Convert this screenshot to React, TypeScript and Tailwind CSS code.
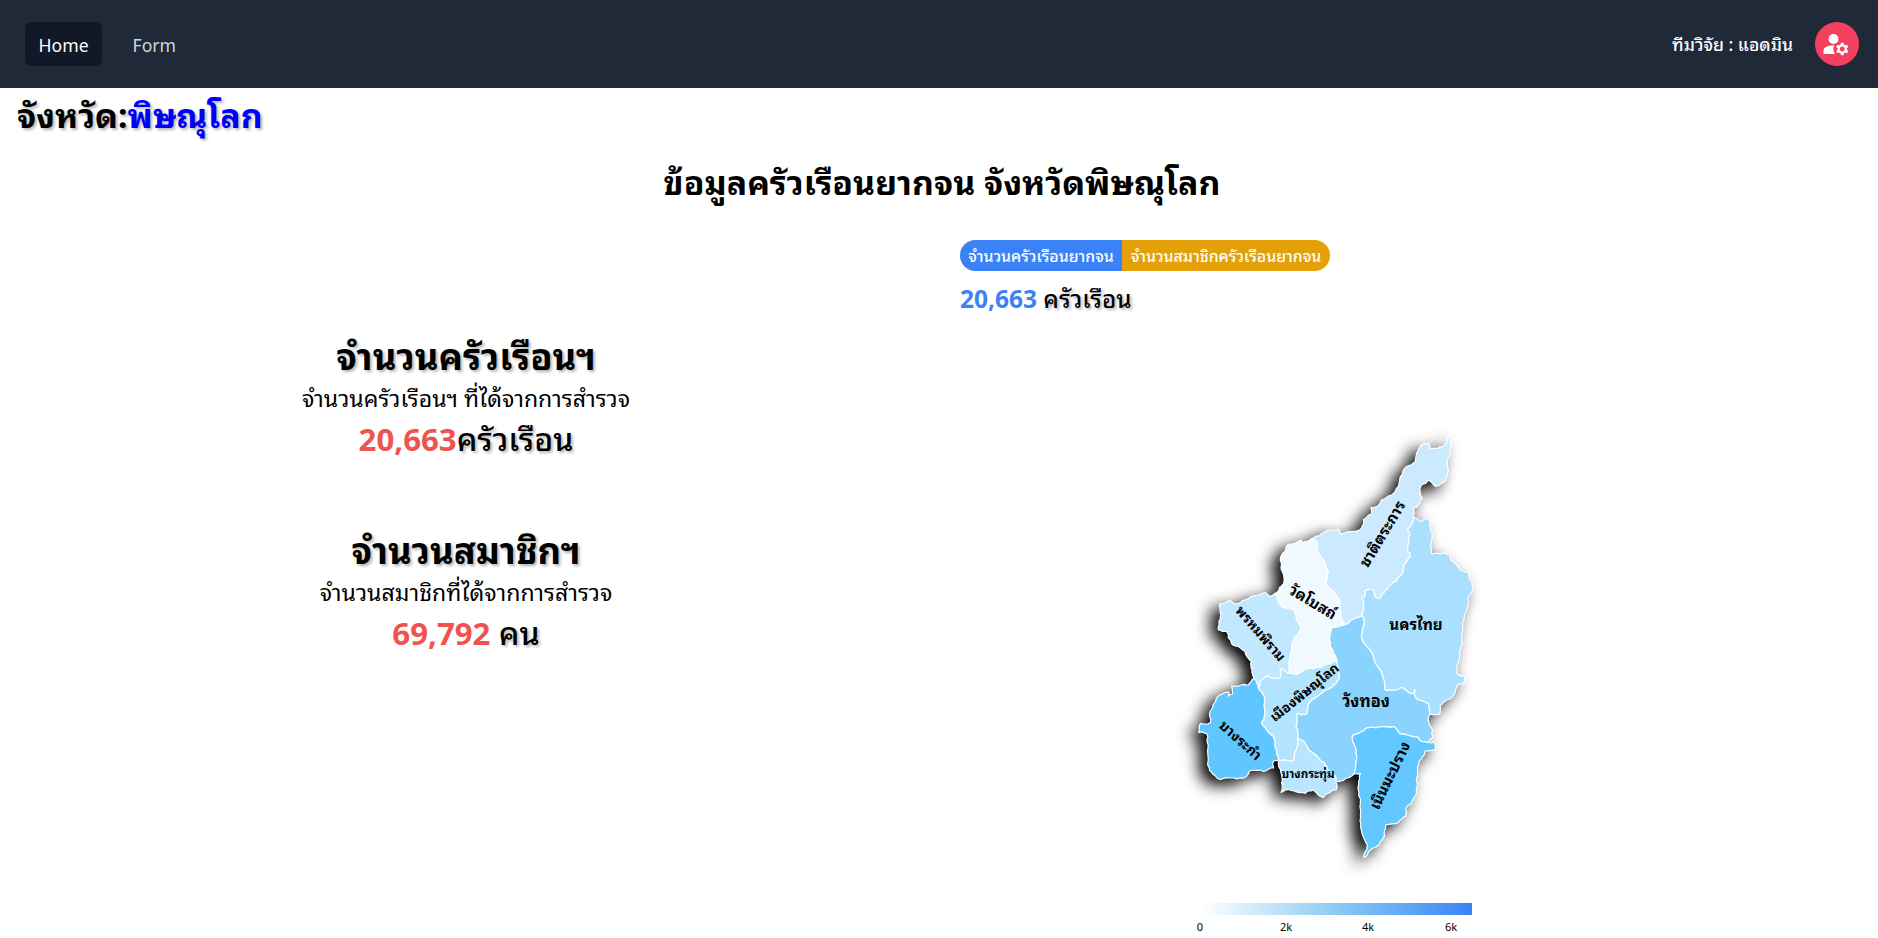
import React from "react";
import { MdManageAccounts } from "react-icons/md";

type Pt = [number, number];

const rev = (a: Pt[]): Pt[] => [...a].reverse();

// Borders shared by neighbouring districts
const chatOuter: Pt[] = [[1311.5,538.5],[1320,535],[1328,530],[1338.5,529],[1340.5,534],[1350,531.5],[1361.5,528.5],[1363.5,519.5],[1371.5,514],[1371,507.5],[1378,506],[1381.5,500],[1391.5,495],[1398.5,486.5],[1400.5,476.5],[1406.5,466.5],[1415.5,461.5],[1416.5,453.5],[1422.5,444],[1428.5,443.5],[1430.5,448.5],[1440,447],[1445,445],[1448.5,436],[1450.5,440.5],[1450,450],[1447.5,461.5],[1448.5,470],[1442.5,483],[1436,486.5],[1428.5,480],[1421.5,485],[1420,491.5],[1422.5,498],[1414,508],[1413.5,517.5]];
const chatNakhon: Pt[] = [[1413.5,517.5],[1410.5,526],[1406.5,530],[1410,533],[1407.5,550],[1410,557],[1403.5,568],[1396,581.5],[1385,590.5],[1380,598.5],[1375,597],[1373.5,590],[1369,589],[1365,591],[1364.5,597],[1361.5,598],[1364,607],[1362.5,616]];
const chatWang: Pt[] = [[1362.5,616],[1353.5,619],[1345,624.5]];
const chatWat: Pt[] = [[1345,624.5],[1341,618],[1340,600],[1335,593],[1326.5,585],[1328.5,571.5],[1323.5,560],[1317.5,550],[1316.5,541.5],[1311.5,538.5]];
const watOuter: Pt[] = [[1275,593.5],[1284,581.5],[1281.5,563],[1281.5,555],[1286.5,546.5],[1300.5,540],[1302.5,543],[1311.5,538.5]];
const watPhrom: Pt[] = [[1275,593.5],[1282.5,607.5],[1294,608.5],[1300.5,630.5],[1293,641.5],[1290,656.5],[1290,673.5]];
const watMueang: Pt[] = [[1290,673.5],[1296,674.5],[1310,668],[1326.5,664],[1337,661]];
const watWang: Pt[] = [[1337,661],[1335,655],[1330,646.5],[1330.5,633],[1332,627],[1337,627],[1345,624.5]];
const nakhonOuter: Pt[] = [[1413.5,517.5],[1420,521.5],[1426,518.5],[1430.5,521.5],[1432,533],[1431.5,553.5],[1450,555],[1451.5,560.5],[1460,570],[1467.5,572.5],[1473.5,586.5],[1468,598],[1466.5,610],[1462.5,623.5],[1462,640],[1459.5,656.5],[1456.5,673.5],[1465,676.5],[1463.5,683.5],[1457.5,685],[1453.5,695],[1440.5,705],[1439.5,714.5],[1429.5,714.5]];
const nakhonWang: Pt[] = [[1429.5,714.5],[1428.5,704],[1418,700],[1415,696],[1415,690],[1412,694],[1402.5,687.5],[1391.5,690.5],[1384.5,689.5],[1382.5,676.5],[1373.5,656.5],[1361.5,638.5],[1364,623.5],[1362.5,616]];
const wangOuterE: Pt[] = [[1429.5,714.5],[1428.5,721.5],[1432,728.5],[1433.5,736.5],[1428.5,742.5]];
const wangNoen: Pt[] = [[1428.5,742.5],[1421.5,741.5],[1416.5,736.5],[1400,733.5],[1394,726.5],[1370,727.5],[1361.5,731.5],[1352.5,736],[1355,746.5],[1356.5,760],[1353.5,774.5]];
const wangOuterS: Pt[] = [[1353.5,774.5],[1345,779],[1336,781.5]];
const wangKrathum: Pt[] = [[1336,781.5],[1335.5,776.5],[1326.5,766.5],[1320,760],[1311.5,752],[1304,741.5],[1297.5,739]];
const wangMueang: Pt[] = [[1297.5,739],[1296.5,713.5],[1306,714.5],[1311.5,700],[1326.5,690],[1338.5,680],[1339.5,675],[1337,661]];
const mueangPhrom: Pt[] = [[1290,673.5],[1280,668.5],[1279.5,678.5],[1267.5,676],[1261.5,680],[1258.5,688]];
const mueangRakam: Pt[] = [[1258.5,688],[1264.5,696.5],[1265,715],[1261.5,722.5],[1273.5,736.5],[1276.5,750],[1278.5,760]];
const mueangKrathum: Pt[] = [[1278.5,760],[1294.5,760],[1297.5,739]];
const phromOuter: Pt[] = [[1254,678.5],[1251.5,661.5],[1245,651.5],[1231.5,643.5],[1226.5,631.5],[1218.5,630],[1221,615],[1220,603.5],[1229.5,600],[1235,604],[1250,597.5],[1265,592.5],[1270,596.5],[1275,593.5]];
const phromRakam: Pt[] = [[1258.5,688],[1254,678.5]];
const rakamOuter: Pt[] = [[1254,678.5],[1248.5,685],[1231.5,686],[1232.5,694],[1228.5,696],[1229,692],[1219.5,695],[1210,711.5],[1210.5,722.5],[1200.5,723.5],[1198.5,732.5],[1206.5,733.5],[1207.5,752],[1209.5,770],[1220.5,779.5],[1233,778],[1246.5,776.5],[1250,770.5],[1263.5,771.5],[1273.5,768],[1273.5,761],[1278.5,760]];
const krathumOuter: Pt[] = [[1278.5,760],[1281,773],[1281,792.5],[1290,790],[1305,793.5],[1313.5,790],[1323.5,797.5],[1336,790],[1336,781.5]];
const noenOuter: Pt[] = [[1353.5,774.5],[1360.5,773.5],[1358.5,795],[1360.5,813],[1362,833.5],[1366.5,843.5],[1364,857.5],[1375,847.5],[1384.5,836.5],[1385.5,825],[1398.5,822.5],[1406,816],[1406,808],[1416.5,793],[1417.5,773],[1419,761.5],[1425,751.5],[1435,750],[1434,742],[1428.5,742.5]];

// Adds small coastline-like wiggles; both sides of a border get the same ones.
function wiggle(a: Pt, b: Pt, depth: number): Pt[] {
  const len = Math.hypot(b[0] - a[0], b[1] - a[1]);
  if (depth === 0 || len < 3.5) return [a];
  const forward = a[0] < b[0] || (a[0] === b[0] && a[1] < b[1]);
  const [p, q] = forward ? [a, b] : [b, a];
  const h = Math.sin(p[0] * 12.9898 + p[1] * 78.233 + q[0] * 37.719 + q[1] * 4.581) * 43758.5453;
  const k = (h - Math.floor(h) - 0.5) * Math.min(0.3, 2.4 / len);
  const m: Pt = [(p[0] + q[0]) / 2 - (q[1] - p[1]) * k, (p[1] + q[1]) / 2 + (q[0] - p[0]) * k];
  return [...wiggle(a, m, depth - 1), ...wiggle(m, b, depth - 1)];
}

function outline(...parts: Pt[][]): string {
  const pts = parts.flatMap((p) => p.slice(0, -1));
  return pts
    .flatMap((p, i) => wiggle(p, pts[(i + 1) % pts.length], 3))
    .map((p) => `${p[0].toFixed(1)},${p[1].toFixed(1)}`)
    .join(" ");
}

type District = { name: string; fill: string; points: string; x: number; y: number; rotate: number; size: number };

const districts: District[] = [
  { name: "ชาติตระการ", fill: "#cceaff", points: outline(chatOuter, chatNakhon, chatWang, chatWat), x: 1383.5, y: 534.5, rotate: -59, size: 15.2 },
  { name: "นครไทย", fill: "#aadfff", points: outline(nakhonOuter, nakhonWang, rev(chatNakhon)), x: 1416, y: 626, rotate: 0, size: 15.2 },
  { name: "วัดโบสถ์", fill: "#f0f9ff", points: outline(watOuter, rev(chatWat), rev(watWang), rev(watMueang), rev(watPhrom)), x: 1312, y: 603, rotate: 31, size: 15.2 },
  { name: "พรหมพิราม", fill: "#c2e8ff", points: outline(phromOuter, watPhrom, mueangPhrom, phromRakam), x: 1260, y: 634, rotate: 49, size: 13.8 },
  { name: "เมืองพิษณุโลก", fill: "#b2e3ff", points: outline(rev(mueangPhrom), watMueang, rev(wangMueang), rev(mueangKrathum), rev(mueangRakam)), x: 1305, y: 693, rotate: -39, size: 13.6 },
  { name: "วังทอง", fill: "#8ad3ff", points: outline(rev(chatWang), rev(nakhonWang), wangOuterE, wangNoen, wangOuterS, wangKrathum, wangMueang, watWang), x: 1366, y: 703, rotate: 0, size: 16.4 },
  { name: "บางระกำ", fill: "#5fc6ff", points: outline(rakamOuter, rev(mueangRakam), phromRakam), x: 1240, y: 741, rotate: 42, size: 14 },
  { name: "บางกระทุ่ม", fill: "#bae5ff", points: outline(krathumOuter, wangKrathum, rev(mueangKrathum)), x: 1308, y: 774, rotate: 0, size: 11.6 },
  { name: "เนินมะปราง", fill: "#62c8ff", points: outline(noenOuter, wangNoen), x: 1391, y: 776, rotate: -64, size: 15 },
];

function ProvinceMap() {
  return (
    <svg viewBox="1180 420 310 450" className="h-[450px] w-[310px] overflow-visible">
      <g className="[filter:drop-shadow(-8px_6px_8px_#000)]">
        {districts.map((d) => (
          <polygon key={d.name} points={d.points} fill={d.fill} stroke="#ffffff" strokeWidth="1.2" strokeLinejoin="round" />
        ))}
      </g>
      {districts.map((d) => (
        <text
          key={d.name}
          transform={`translate(${d.x} ${d.y}) rotate(${d.rotate})`}
          y={4}
          fontSize={d.size}
          fontWeight="700"
          textAnchor="middle"
        >
          {d.name}
        </text>
      ))}
    </svg>
  );
}

function Legend() {
  return (
    <div className="ml-5 w-[272px]">
      <div className="h-3 bg-linear-to-r from-white via-[#8bcbf3] to-[#3b82f6]" />
      <div className="flex pt-[4px] text-[11px] leading-[15px]">
        <span className="-ml-5 w-10 text-center">0</span>
        <span className="ml-[46px] w-10 text-center">2k</span>
        <span className="ml-[42px] w-10 text-center">4k</span>
        <span className="ml-[43px] w-10 text-center">6k</span>
      </div>
    </div>
  );
}

function Stat({ title, note, value, unit }: { title: string; note: string; value: string; unit: string }) {
  return (
    <div className="flex flex-col items-center">
      <h3 className="text-[36.4px] leading-[38px] font-bold [text-shadow:2px_2px_3px_rgba(0,0,0,0.3)]">{title}</h3>
      <p className="mt-[7px] text-[23.1px] leading-8">{note}</p>
      <p className="mt-[2px] text-[31.2px] leading-[45px] whitespace-pre">
        <span className="font-bold text-[#ef5350]">{value}</span>
        <span className="text-[32px] font-medium [text-shadow:2px_2px_3px_rgba(0,0,0,0.3)]">{unit}</span>
      </p>
    </div>
  );
}

export default function App() {
  return (
    <div className="h-[938px] overflow-hidden bg-white font-['Noto_Sans','Noto_Sans_Thai_Looped','Noto_Sans_Thai',sans-serif] text-black">
      <nav className="flex h-[88px] items-center justify-between bg-[#1f2937] pr-[19px] pl-[25px]">
        <div className="flex gap-[17px] text-[17.6px] leading-7">
          <a className="rounded-md bg-[#111827] px-[13.5px] pt-[9px] pb-[7px] text-white">Home</a>
          <a className="px-[13.5px] pt-[9px] pb-[7px] text-[#d1d5db]">Form</a>
        </div>
        <div className="flex items-center gap-[22px]">
          <span className="pt-px text-[17.5px] font-medium text-white">ทีมวิจัย : แอดมิน</span>
          <span className="flex size-11 items-center justify-center rounded-full bg-[#f43f5e] pr-[2px] text-white">
            <MdManageAccounts size={30} />
          </span>
        </div>
      </nav>

      <h1 className="h-[70px] pl-[17px] text-[33.8px] leading-[54px] font-bold [text-shadow:2px_2px_3px_rgba(0,0,0,0.3)]">
        จังหวัด:<span className="text-[#0000ff]">พิษณุโลก</span>
      </h1>
      <h2 className="h-[82px] pl-[6px] text-center text-[33.8px] leading-[48px] font-bold">ข้อมูลครัวเรือนยากจน จังหวัดพิษณุโลก</h2>

      <div className="flex">
        <section className="flex w-[960px] flex-col gap-[69px] pt-[97px] pr-[28px]">
          <Stat title="จำนวนครัวเรือนฯ" note="จำนวนครัวเรือนฯ ที่ได้จากการสำรวจ" value="20,663" unit="ครัวเรือน" />
          <Stat title="จำนวนสมาชิกฯ" note="จำนวนสมาชิกที่ได้จากการสำรวจ" value="69,792" unit=" คน" />
        </section>
        <section className="flex flex-col">
          <div className="flex h-[31px] text-[15.8px] leading-[31px] font-medium text-white">
            <button className="w-[162px] rounded-l-full bg-[#3b82f6] pt-px whitespace-nowrap">จำนวนครัวเรือนยากจน</button>
            <button className="w-[208px] rounded-r-full bg-[#e3a008] pt-px whitespace-nowrap">จำนวนสมาชิกครัวเรือนยากจน</button>
          </div>
          <p className="mt-[10px] h-9 text-[24.5px] leading-9 whitespace-pre">
            <span className="font-bold text-[#3b82f6]">20,663</span>
            <span className="text-[24.2px] font-medium [text-shadow:2px_2px_3px_rgba(0,0,0,0.3)]"> ครัวเรือน</span>
          </p>
          <div className="mt-[103px] ml-[220px]">
            <ProvinceMap />
            <div className="pt-[33px]">
              <Legend />
            </div>
          </div>
        </section>
      </div>
    </div>
  );
}
